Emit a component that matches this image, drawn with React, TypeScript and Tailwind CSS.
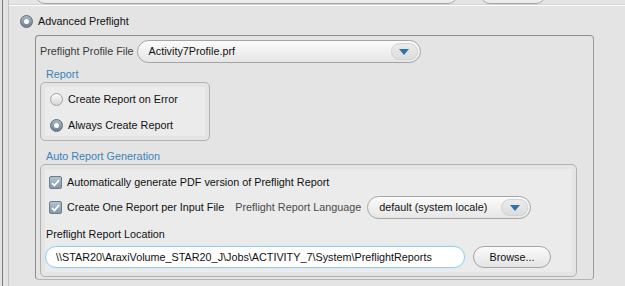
import React from 'react';

const font = { fontFamily: '"Liberation Sans", Arial, sans-serif' };

const Radio = ({ checked }: { checked?: boolean }) => (
    <span
        className={
            checked
                ? 'flex h-[13px] w-[13px] shrink-0 items-center justify-center rounded-full border border-[#5d6d7a] bg-gradient-to-b from-[#a9b7c2] to-[#6f8190]'
                : 'flex h-[13px] w-[13px] shrink-0 items-center justify-center rounded-full border border-[#a3a3a3] bg-gradient-to-b from-[#fbfbfb] to-[#d6d6d6]'
        }
    >
        {checked && <span className="h-[5px] w-[5px] rounded-full bg-white" />}
    </span>
);

const Check = () => (
    <span className="flex h-[13px] w-[13px] shrink-0 items-center justify-center rounded-[2px] border border-[#6b7d8b] bg-gradient-to-b from-[#b2c2cf] to-[#8398a9]">
        <svg width="9" height="8" viewBox="0 0 9 8">
            <path d="M1 4.2 L3.4 6.5 L8 1.2" fill="none" stroke="white" strokeWidth="1.8" />
        </svg>
    </span>
);

const Combo = ({ value, className }: { value: string; className: string }) => (
    <div
        className={`flex h-[23px] items-center rounded-full border border-[#a5a5a5] bg-gradient-to-b from-[#fbfbfb] to-[#e6e6e6] pl-[11px] pr-[2px] ${className}`}
    >
        <span className="flex-1 text-[#111]">{value}</span>
        <span className="flex h-[17px] w-[27px] items-center justify-center rounded-full border border-[#d2d2d2] bg-gradient-to-b from-[#ececec] to-[#dcdcdc]">
            <svg width="10" height="6" viewBox="0 0 10 6">
                <path d="M0 0 H10 L5 6 Z" fill="#2d74ad" />
            </svg>
        </span>
    </div>
);

export default function App() {
    return (
        <div className="flex h-[286px] w-[625px] overflow-hidden bg-[#e4e4e4] text-[10.8px]" style={font}>
            <div className="ml-[2px] w-px bg-[#7a7a7a]" />
            <div className="ml-[5px] w-px bg-[#c2c2c2]" />
            <div className="flex flex-1 flex-col">
                {/* bottoms of the controls above */}
                <div className="flex h-[4px] overflow-hidden">
                    <div className="ml-[26px] -mt-[17px] h-[21px] w-[423px] rounded-[10px] border border-[#a5a5a5] bg-[#ececec]" />
                    <div className="ml-[22px] -mt-[17px] h-[21px] w-[66px] rounded-[10px] border border-[#a5a5a5] bg-[#ececec]" />
                </div>
                <div className="h-px bg-[#d4d4d4]" />
                <div className="h-px bg-white" />

                <div className="flex items-center gap-[5px] pl-[11px] pt-[9px]">
                    <Radio checked />
                    <span className="leading-[13px] text-[#111]">Advanced Preflight</span>
                </div>

                <div className="ml-[26px] mt-[7px] flex h-[245px] w-[559px] flex-col rounded-[4px] border border-[#8e8e8e] border-b-[#b4b4b4] border-r-[#9a9a9a] pl-[4px] pt-[4px]">
                    <div className="flex items-center">
                        <span className="text-[#3a3a3a]">Preflight Profile File</span>
                        <Combo value="Activity7Profile.prf" className="ml-[3px] w-[284px]" />
                    </div>

                    <span className="ml-[6px] mt-[5px] leading-[13px] text-[#3b82b8]">Report</span>
                    <div className="mt-px w-[170px] rounded-[5px] border border-[#b0b0b0] p-[4px]">
                        <div className="flex flex-col gap-[13px] bg-[#ebebeb] pb-[4px] pl-[5px] pt-[6px]">
                            <div className="flex items-center gap-[5px]">
                                <Radio />
                                <span className="leading-[13px] text-[#111]">Create Report on Error</span>
                            </div>
                            <div className="flex items-center gap-[5px]">
                                <Radio checked />
                                <span className="leading-[13px] text-[#111]">Always Create Report</span>
                            </div>
                        </div>
                    </div>

                    <span className="ml-[6px] mt-[9px] leading-[13px] text-[#3b82b8]">Auto Report Generation</span>
                    <div className="mt-px w-[537px] rounded-[5px] border border-[#b0b0b0] p-[4px]">
                        <div className="flex flex-col bg-[#ebebeb] pb-[4px] pt-[7px]">
                            <div className="ml-[4px] flex items-center gap-[5px]">
                                <Check />
                                <span className="leading-[13px] text-[#111]">
                                    Automatically generate PDF version of Preflight Report
                                </span>
                            </div>
                            <div className="ml-[4px] mt-[7px] flex items-center">
                                <Check />
                                <span className="ml-[5px] text-[#111]">Create One Report per Input File</span>
                                <span className="ml-[11px] text-[#4a4a4a]">Preflight Report Language</span>
                                <Combo value="default (system locale)" className="ml-[6px] w-[164px]" />
                            </div>
                            <span className="ml-px mt-[9px] leading-[13px] text-[#111]">Preflight Report Location</span>
                            <div className="mt-[5px] flex items-center">
                                <div className="flex h-[22px] w-[420px] items-center rounded-full border border-[#9fcbe6] bg-white pl-[10px] shadow-[0_0_0_1px_#d6ebf7]">
                                    <span className="text-[#111]">
                                        \\STAR20\AraxiVolume_STAR20_J\Jobs\ACTIVITY_7\System\PreflightReports
                                    </span>
                                </div>
                                <div className="ml-[8px] flex h-[22px] w-[78px] items-center justify-center rounded-full border border-[#a5a5a5] bg-gradient-to-b from-[#fbfbfb] to-[#e4e4e4]">
                                    <span className="text-[#111]">Browse...</span>
                                </div>
                            </div>
                        </div>
                    </div>
                </div>
            </div>
        </div>
    );
}
